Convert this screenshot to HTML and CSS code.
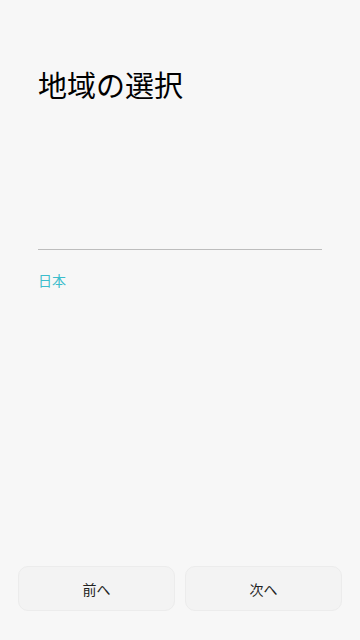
FILE: index.html
```html
<!DOCTYPE html>
<html lang="ja">
<head>
<meta charset="utf-8">
<link rel="stylesheet" href="styles.css">
</head>
<body>
<div class="screen">
  <div class="content">
    <h1 class="title">地域の選択</h1>
    <div class="divider"></div>
    <div class="region">日本</div>
  </div>
  <div class="buttons">
    <button class="btn">前へ</button>
    <button class="btn">次へ</button>
  </div>
</div>
</body>
</html>
```
FILE: styles.css
```css
html, body {
  margin: 0;
  padding: 0;
  background: #f7f7f7;
}
body {
  font-family: "Noto Sans CJK JP", "Noto Sans", sans-serif;
}
.screen {
  width: 360px;
  height: 640px;
  display: flex;
  flex-direction: column;
  box-sizing: border-box;
}
.content {
  flex: 1;
  padding: 0 38px;
  display: flex;
  flex-direction: column;
}
.title {
  margin: 64px 0 0 0;
  font-size: 29px;
  font-weight: 400;
  line-height: 40px;
  color: #000;
}
.divider {
  margin-top: 145px;
  height: 1px;
  background: #bdbdbd;
}
.region {
  margin-top: 20px;
  font-size: 14px;
  line-height: 20px;
  color: #3dbdcc;
}
.buttons {
  display: flex;
  gap: 10px;
  padding: 0 18px 29px 18px;
}
.btn {
  flex: 1;
  height: 45px;
  border: 1px solid #ececec;
  border-radius: 10px;
  background: #f3f3f3;
  font-family: "Noto Sans CJK JP", "Noto Sans", sans-serif;
  font-size: 14px;
  color: #222;
  padding: 0;
}
```
